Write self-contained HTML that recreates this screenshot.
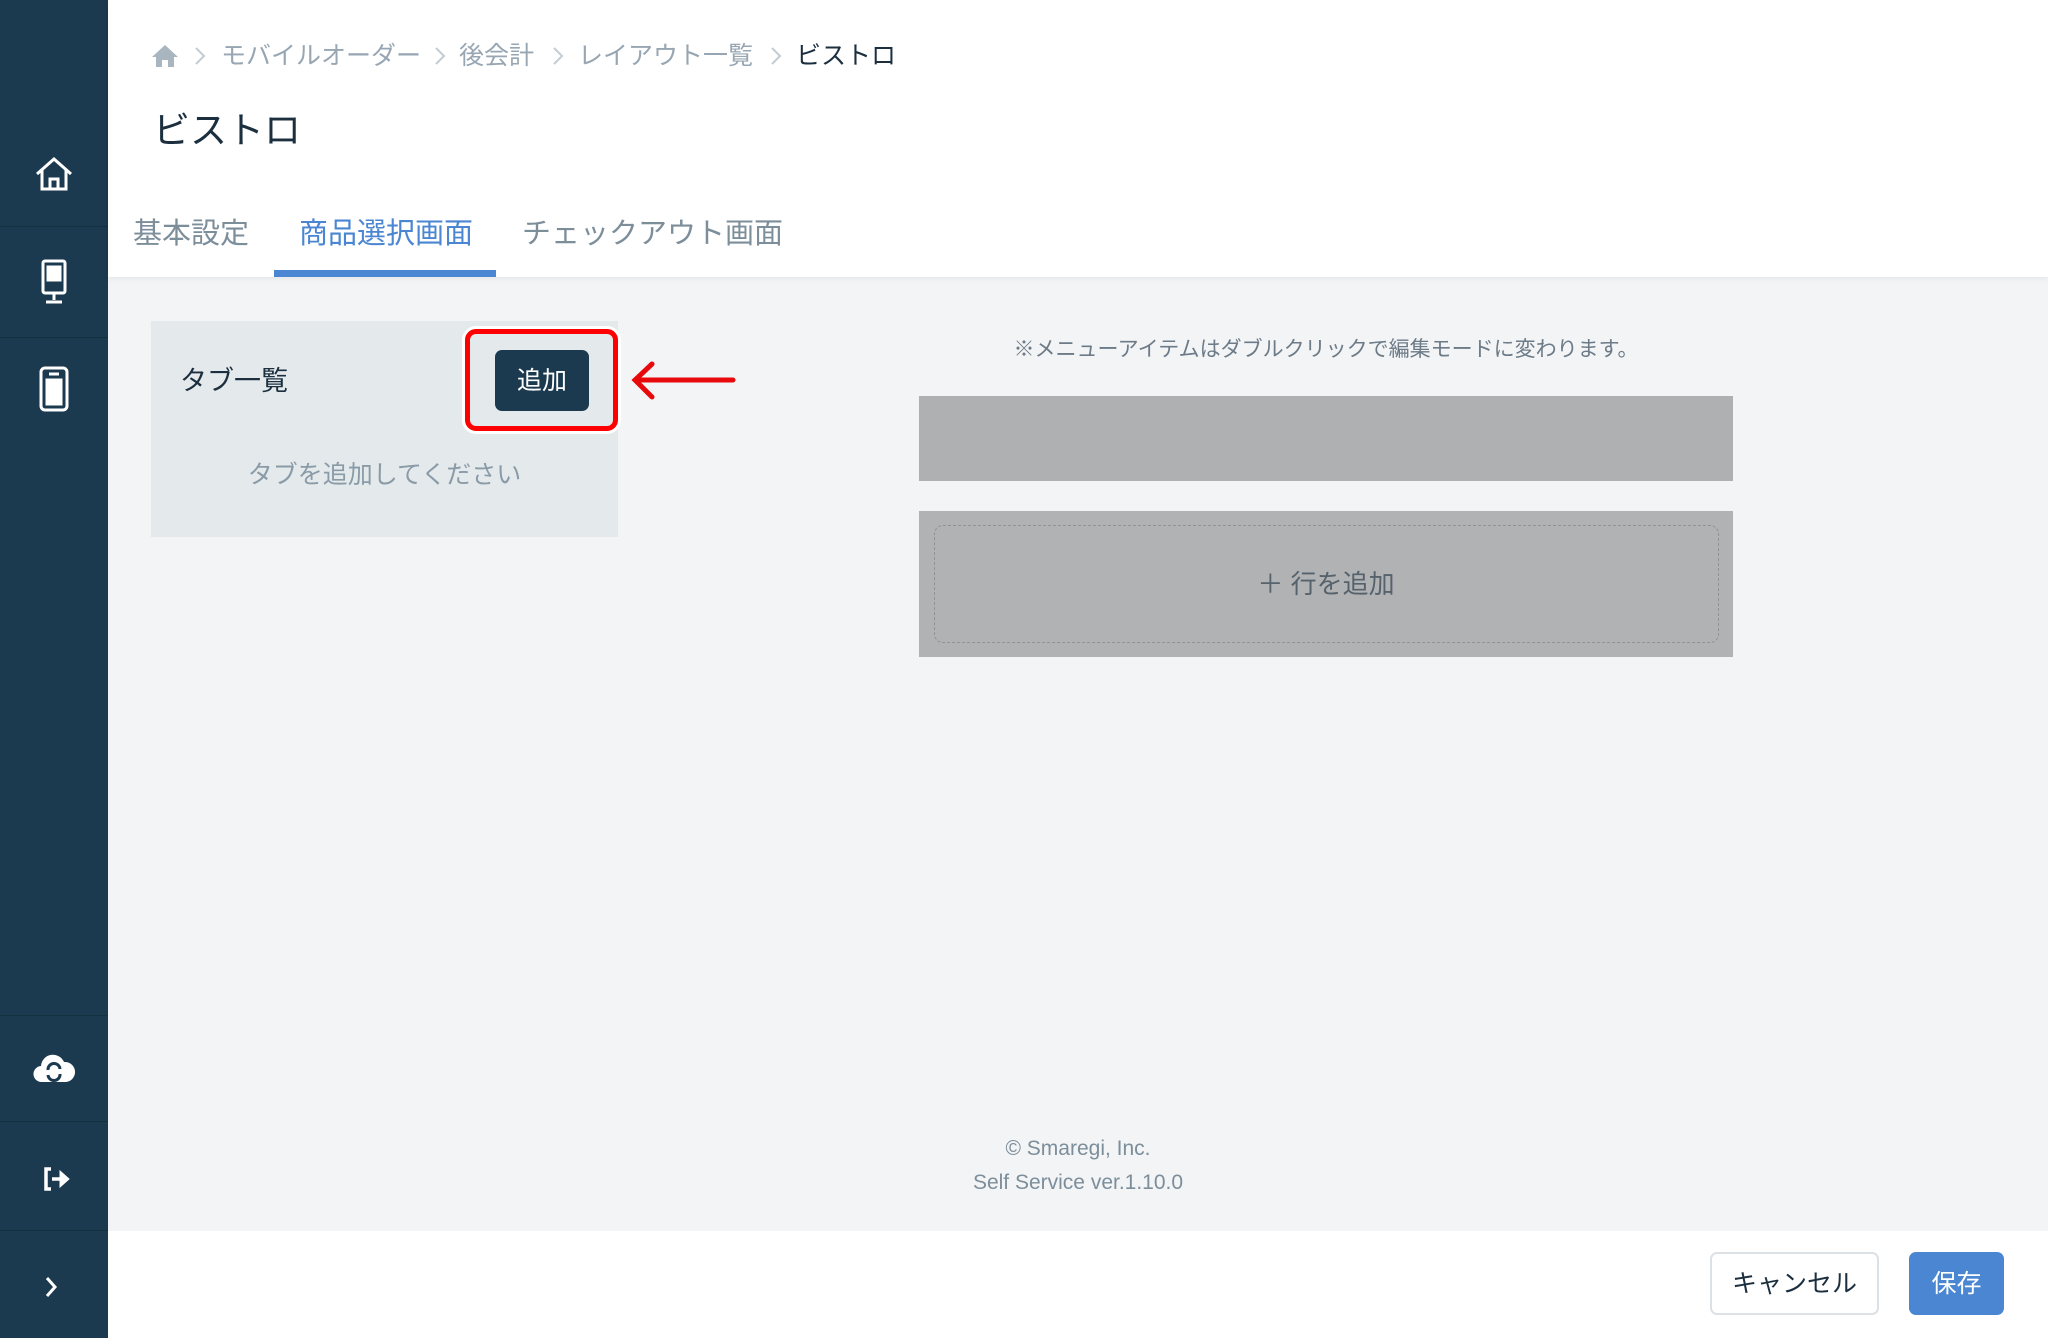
<!DOCTYPE html>
<html><head><meta charset="utf-8"><style>
*{margin:0;padding:0;box-sizing:border-box}
body{width:2048px;height:1338px;position:relative;overflow:hidden;background:#f2f4f6;font-family:"Liberation Sans","Noto Sans CJK JP",sans-serif}
.abs{position:absolute}
#side{left:0;top:0;width:108px;height:1338px;background:#1b3a4f}
.sep{position:absolute;left:0;width:108px;height:1px;background:#15303f}
#head{left:108px;top:0;width:1940px;height:277px;background:#fff;box-shadow:0 2px 6px rgba(0,0,0,.06)}
.t{position:absolute;white-space:nowrap;line-height:1}
.chev{position:absolute;top:46px}
</style></head><body>
<div id="side" class="abs">
<div class="sep" style="top:226px"></div><div class="sep" style="top:337px"></div>
<div class="sep" style="top:1015px"></div><div class="sep" style="top:1121px"></div><div class="sep" style="top:1230px"></div>
<svg class="abs" style="left:34px;top:156px" width="40" height="36" viewBox="0 0 40 36" fill="none" stroke="#fff" stroke-width="3"><path d="M3 18 L20 3 L37 18 M8 14 V33 H32 V14 M16 33 V23 H24 V33"/></svg>
<svg class="abs" style="left:41px;top:259px" width="26" height="46" viewBox="0 0 26 46" fill="none" stroke="#fff" stroke-width="3"><rect x="2" y="2" width="22" height="32" rx="2"/><rect x="7" y="8" width="5" height="5" fill="#fff"/><rect x="14" y="8" width="5" height="5" fill="#fff"/><rect x="7" y="16" width="5" height="5" fill="#fff"/><rect x="14" y="16" width="5" height="5" fill="#fff"/><path d="M13 34V41M5 43H21"/></svg>
<svg class="abs" style="left:39px;top:366px" width="30" height="46" viewBox="0 0 30 46" fill="none" stroke="#fff" stroke-width="3"><rect x="2" y="2" width="26" height="42" rx="4"/><path d="M10 8H20"/><rect x="8" y="14" width="6" height="7" fill="#fff"/><rect x="16" y="14" width="6" height="7" fill="#fff"/><rect x="8" y="24" width="6" height="7" fill="#fff"/><rect x="16" y="24" width="6" height="7" fill="#fff"/><rect x="8" y="34" width="14" height="4" fill="#fff"/></svg>
<svg class="abs" style="left:32px;top:1052px" width="44" height="32" viewBox="0 0 44 32"><path d="M10 30 A8 8 0 0 1 9 14 A12 12 0 0 1 32 10 A10 10 0 0 1 34 30 Z" fill="#fff"/><path d="M16 18 A6 6 0 0 1 28 17 M28 22 A6 6 0 0 1 16 23" fill="none" stroke="#1b3a4f" stroke-width="3"/></svg>
<svg class="abs" style="left:42px;top:1166px" width="30" height="26" viewBox="0 0 30 26" fill="none" stroke="#fff" stroke-width="3.5"><path d="M9 3H4V23H9"/><path d="M10 13H20" /><path d="M18 5L27 13L18 21Z" fill="#fff" stroke-width="1"/></svg>
<svg class="abs" style="left:44px;top:1276px" width="14" height="22" viewBox="0 0 14 22" fill="none" stroke="#fff" stroke-width="3"><path d="M3 2L11 11L3 20"/></svg>
</div>
<div id="head" class="abs"></div>
<svg class="abs" style="left:151px;top:44px" width="28" height="24" viewBox="0 0 28 24"><path d="M14 1L1 13H5V23H11V16H17V23H23V13H27Z" fill="#a9b6c0"/></svg>
<svg class="chev" style="left:194px" width="12" height="20" viewBox="0 0 12 20" fill="none" stroke="#c3ccd3" stroke-width="2"><path d="M2 2L10 10L2 18"/></svg>
<div class="t" style="left:221px;top:44px;font-size:25px;color:#97a6b2">モバイルオーダー</div>
<svg class="chev" style="left:434px" width="12" height="20" viewBox="0 0 12 20" fill="none" stroke="#c3ccd3" stroke-width="2"><path d="M2 2L10 10L2 18"/></svg>
<div class="t" style="left:459px;top:44px;font-size:25px;color:#97a6b2">後会計</div>
<svg class="chev" style="left:552px" width="12" height="20" viewBox="0 0 12 20" fill="none" stroke="#c3ccd3" stroke-width="2"><path d="M2 2L10 10L2 18"/></svg>
<div class="t" style="left:578px;top:44px;font-size:25px;color:#97a6b2">レイアウト一覧</div>
<svg class="chev" style="left:770px" width="12" height="20" viewBox="0 0 12 20" fill="none" stroke="#c3ccd3" stroke-width="2"><path d="M2 2L10 10L2 18"/></svg>
<div class="t" style="left:796px;top:44px;font-size:25px;color:#1b2f3f">ビストロ</div>
<div class="t" style="left:153px;top:112px;font-size:37px;color:#1b2f3f">ビストロ</div>
<div class="t" style="left:133px;top:220px;font-size:29px;color:#7d8e9b">基本設定</div>
<div class="t" style="left:299px;top:220px;font-size:29px;color:#4a86d1">商品選択画面</div>
<div class="t" style="left:522px;top:220px;font-size:29px;color:#7d8e9b">チェックアウト画面</div>
<div class="abs" style="left:274px;top:270px;width:222px;height:7px;background:#4a86d1"></div>

<div class="abs" style="left:151px;top:321px;width:467px;height:216px;background:#e4e9ec"></div>
<div class="t" style="left:180px;top:368px;font-size:27px;color:#1b2f3f">タブ一覧</div>
<div class="abs" style="left:465px;top:329px;width:153px;height:102px;border:5px solid #f00;border-radius:11px;box-shadow:0 0 0 3px #fff"></div>
<div class="abs" style="left:495px;top:350px;width:94px;height:61px;background:#1b3a4f;border-radius:7px;color:#fff;font-size:25px;text-align:center;line-height:63px">追加</div>
<svg class="abs" style="left:630px;top:360px" width="106" height="42" viewBox="0 0 106 42" fill="none" stroke="#e8090c" stroke-width="5" stroke-linecap="round"><path d="M103 20H6M22 4L5 20L22 37"/></svg>
<div class="t" style="left:151px;width:467px;text-align:center;top:463px;font-size:25px;color:#8a9ba8">タブを追加してください</div>

<div class="t" style="left:919px;width:814px;text-align:center;top:339px;font-size:21px;color:#6c7b87">※メニューアイテムはダブルクリックで編集モードに変わります。</div>
<div class="abs" style="left:919px;top:396px;width:814px;height:85px;background:#aeb0b2"></div>
<div class="abs" style="left:919px;top:511px;width:814px;height:146px;background:#b0b2b4"></div>
<div class="abs" style="left:934px;top:525px;width:785px;height:118px;border:1px dashed #8e9399;border-radius:9px"></div>
<div class="t" style="left:919px;width:814px;text-align:center;top:571px;font-size:26px;color:#56626c">＋ 行を追加</div>

<div class="t" style="left:108px;width:1940px;text-align:center;top:1132px;font-size:21px;color:#7d8e9b;line-height:34px">© Smaregi, Inc.<br>Self Service ver.1.10.0</div>
<div class="abs" style="left:108px;top:1231px;width:1940px;height:107px;background:#fff"></div>
<div class="abs" style="left:1710px;top:1252px;width:169px;height:63px;border:2px solid #dce1e5;border-radius:7px;background:#fff;color:#1b2f3f;font-size:25px;text-align:center;line-height:61px">キャンセル</div>
<div class="abs" style="left:1909px;top:1252px;width:95px;height:63px;border-radius:7px;background:#4a86d1;color:#fff;font-size:25px;text-align:center;line-height:65px">保存</div>
</body></html>
